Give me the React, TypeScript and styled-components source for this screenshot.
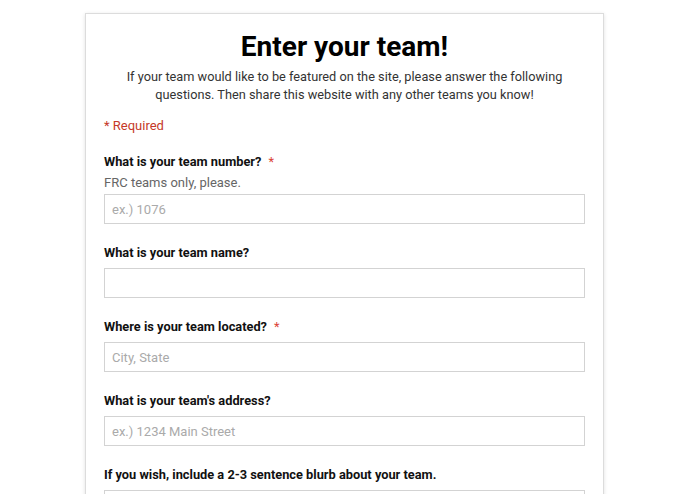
import React from "react";
import styled, { createGlobalStyle } from "styled-components";

const GlobalStyle = createGlobalStyle`
  html, body {
    margin: 0;
    padding: 0;
    background: #ffffff;
    font-family: Roboto, "Liberation Sans", Arial, sans-serif;
  }
`;

interface Question {
  label: string;
  required?: boolean;
  hint?: string;
  placeholder?: string;
}

const questions: Question[] = [
  {
    label: "What is your team number?",
    required: true,
    hint: "FRC teams only, please.",
    placeholder: "ex.) 1076",
  },
  { label: "What is your team name?" },
  { label: "Where is your team located?", required: true, placeholder: "City, State" },
  { label: "What is your team's address?", placeholder: "ex.) 1234 Main Street" },
  { label: "If you wish, include a 2-3 sentence blurb about your team." },
];

const App = () => {
  return (
    <>
      <GlobalStyle />
      <Page>
        <Card>
          <Title>Enter your team!</Title>
          <Intro>
            If your team would like to be featured on the site, please answer the following
            questions. Then share this website with any other teams you know!
          </Intro>
          <RequiredNote>* Required</RequiredNote>
          {questions.map((q) => (
            <Field key={q.label}>
              <Label>
                {q.label}
                {q.required && <Star>*</Star>}
              </Label>
              {q.hint && <Hint>{q.hint}</Hint>}
              <TextInput type="text" placeholder={q.placeholder} hasHint={!!q.hint} />
            </Field>
          ))}
        </Card>
      </Page>
    </>
  );
};
export default App;

const Page = styled.div`
  height: 494px;
  overflow: hidden;
  padding: 13px 0 0 85px;
  box-sizing: border-box;
`;

const Card = styled.div`
  width: 519px;
  box-sizing: border-box;
  border: 1px solid #dcdcdc;
  border-bottom: none;
  box-shadow: 0 1px 4px rgba(0, 0, 0, 0.12);
  padding: 16px 18px 40px 18px;
  background: #fff;
  display: flex;
  flex-direction: column;
`;

const Title = styled.h1`
  margin: 0;
  text-align: center;
  font-size: 28px;
  font-weight: 700;
  line-height: 34px;
  color: #000;
`;

const Intro = styled.p`
  margin: 4px 0 0 0;
  text-align: center;
  font-size: 12.75px;
  line-height: 18px;
  color: #333;
`;

const RequiredNote = styled.div`
  margin-top: 12px;
  font-size: 13px;
  line-height: 19px;
  color: #c53929;
`;

const Field = styled.div`
  display: flex;
  flex-direction: column;
  margin-top: 17px;
  & + & {
    margin-top: 19px;
  }
`;

const Label = styled.div`
  font-size: 12.8px;
  font-weight: 700;
  line-height: 19px;
  color: #111;
`;

const Star = styled.span`
  color: #db4437;
  margin-left: 7px;
  font-weight: 400;
`;

const Hint = styled.div`
  font-size: 13px;
  line-height: 19px;
  color: #666;
  margin-top: 2px;
`;

const TextInput = styled.input<{ hasHint: boolean }>`
  margin-top: ${(props) => (props.hasHint ? "2px" : "6px")};
  height: 30px;
  box-sizing: border-box;
  border: 1px solid #d3d3d3;
  padding: 0 7px;
  font-family: Roboto, "Liberation Sans", Arial, sans-serif;
  font-size: 13px;
  color: #222;
  outline: none;
  &::placeholder {
    color: #aaa;
  }
`;
